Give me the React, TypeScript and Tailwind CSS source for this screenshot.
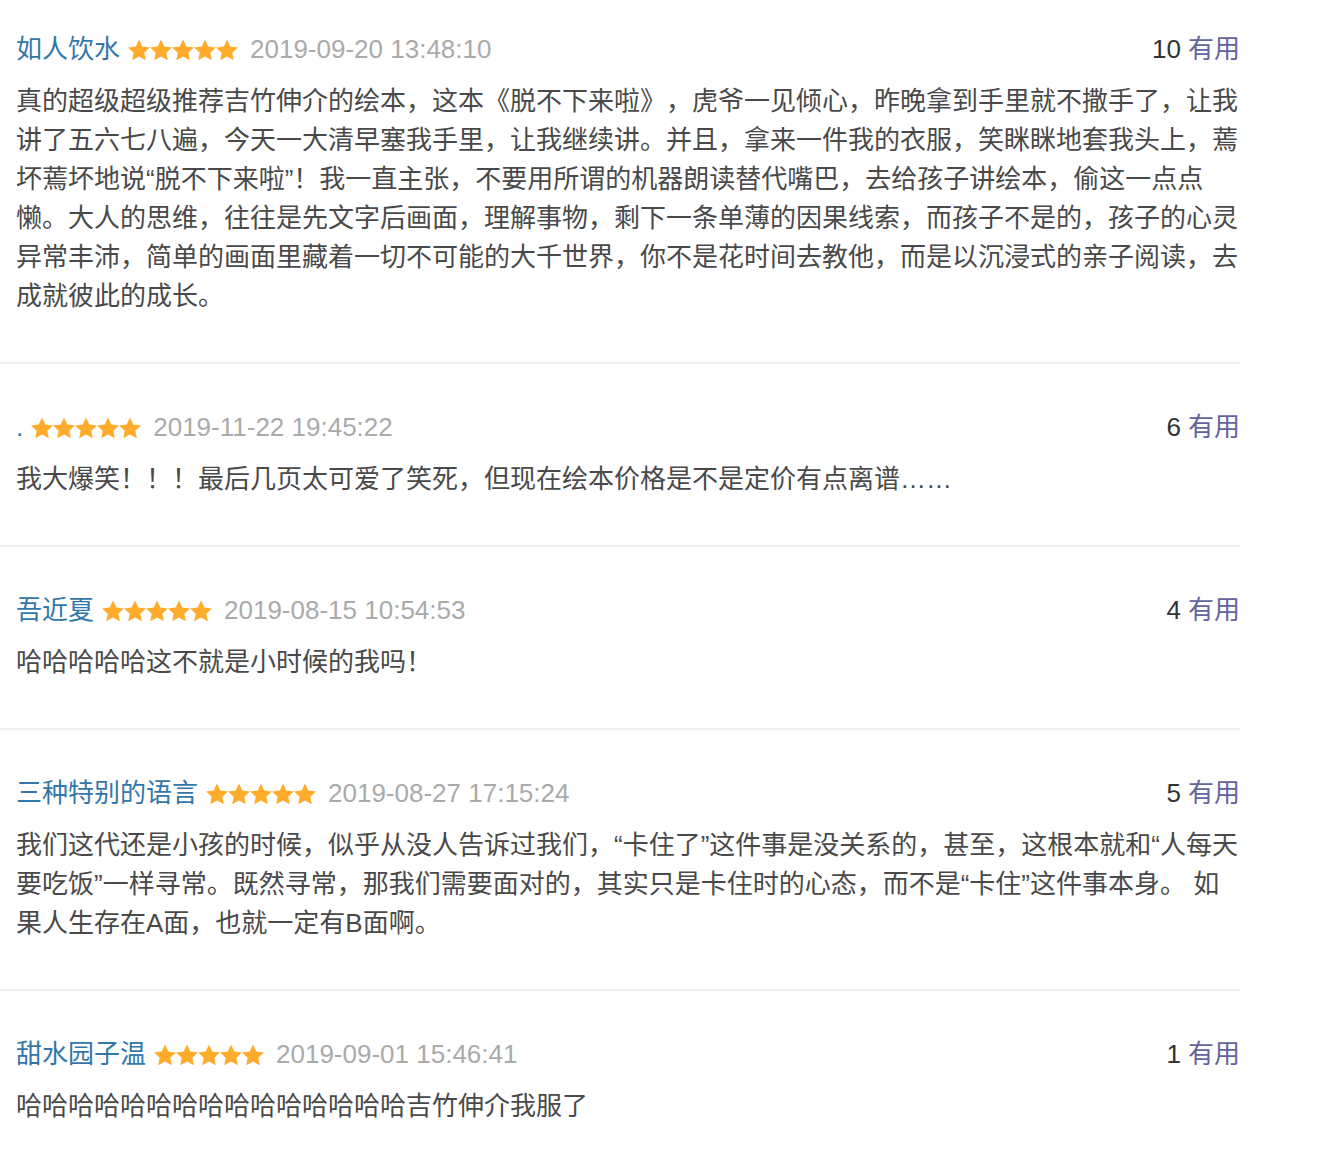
import React from "react";

type Review = { name: string; date: string; votes: number; body: React.ReactNode };

const reviews: Review[] = [
  {
    name: "如人饮水",
    date: "2019-09-20 13:48:10",
    votes: 10,
    body: "真的超级超级推荐吉竹伸介的绘本，这本《脱不下来啦》，虎爷一见倾心，昨晚拿到手里就不撒手了，让我讲了五六七八遍，今天一大清早塞我手里，让我继续讲。并且，拿来一件我的衣服，笑眯眯地套我头上，蔫坏蔫坏地说“脱不下来啦”！我一直主张，不要用所谓的机器朗读替代嘴巴，去给孩子讲绘本，偷这一点点懒。大人的思维，往往是先文字后画面，理解事物，剩下一条单薄的因果线索，而孩子不是的，孩子的心灵异常丰沛，简单的画面里藏着一切不可能的大千世界，你不是花时间去教他，而是以沉浸式的亲子阅读，去成就彼此的成长。",
  },
  {
    name: ".",
    date: "2019-11-22 19:45:22",
    votes: 6,
    body: "我大爆笑！！！最后几页太可爱了笑死，但现在绘本价格是不是定价有点离谱……",
  },
  {
    name: "吾近夏",
    date: "2019-08-15 10:54:53",
    votes: 4,
    body: "哈哈哈哈哈这不就是小时候的我吗！",
  },
  {
    name: "三种特别的语言",
    date: "2019-08-27 17:15:24",
    votes: 5,
    body: "我们这代还是小孩的时候，似乎从没人告诉过我们，“卡住了”这件事是没关系的，甚至，这根本就和“人每天要吃饭”一样寻常。既然寻常，那我们需要面对的，其实只是卡住时的心态，而不是“卡住”这件事本身。 如果人生存在A面，也就一定有B面啊。",
  },
  {
    name: "甜水园子温",
    date: "2019-09-01 15:46:41",
    votes: 1,
    body: "哈哈哈哈哈哈哈哈哈哈哈哈哈哈哈吉竹伸介我服了",
  },
];

function Stars() {
  return (
    <svg width="110" height="22" viewBox="0 0 110 22" className="shrink-0">
      {[0, 1, 2, 3, 4].map((i) => (
        <polygon
          key={i}
          transform={`translate(${i * 22} 0)`}
          points="11,0.5 14.29,7.47 21.94,8.45 16.33,13.73 17.76,21.3 11,17.6 4.24,21.3 5.67,13.73 0.06,8.45 7.71,7.47"
          fill="#ffac2d"
        />
      ))}
    </svg>
  );
}

export default function App() {
  return (
    <div className="w-[1240px] bg-white font-['Liberation_Sans','Noto_Sans_CJK_SC',sans-serif] text-[26px] [text-spacing-trim:space-all] [text-autospace:no-autospace]">
      {reviews.map((r, idx) => (
        <div
          key={idx}
          className={`pl-[16px] pb-[46px] ${idx === 0 ? "pt-[30px]" : "pt-[44px]"} ${
            idx < reviews.length - 1 ? "border-b-2 border-[#eeeeee]" : ""
          }`}
        >
          <div className="flex h-[39px] items-center justify-between leading-[39px]">
            <div className="flex items-center">
              <span className="text-[#3377aa]">{r.name}</span>
              <span className="ml-[8px] flex items-center">
                <Stars />
              </span>
              <span className="ml-[12px] text-[#aaaaaa]">{r.date}</span>
            </div>
            <div className="flex items-center">
              <span className="text-[#333333]">{r.votes}</span>
              <span className="ml-[7px] text-[#63639e]">有用</span>
            </div>
          </div>
          <p className="mt-[13px] leading-[39px] text-[#494949]">{r.body}</p>
        </div>
      ))}
    </div>
  );
}
